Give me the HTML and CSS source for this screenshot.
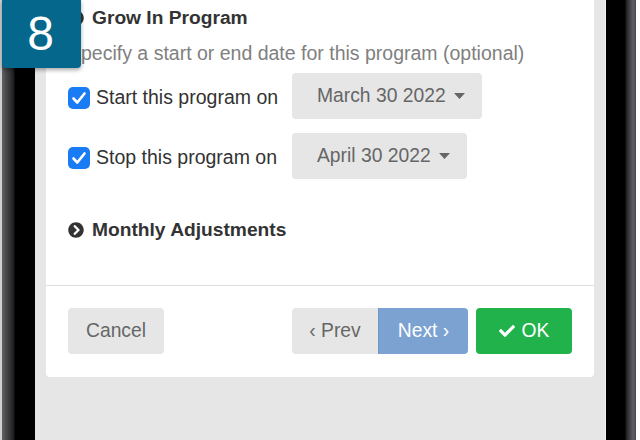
FILE: index.html
```html
<!DOCTYPE html>
<html>
<head>
<meta charset="utf-8">
<link rel="stylesheet" href="styles.css">
</head>
<body>
<div class="device">
  <div class="frame frame-left"></div>
  <div class="screen">
    <div class="panel">
      <div class="panel-body">
        <h3 class="section-title">
          <svg class="circle-icon" viewBox="0 0 512 512"><path d="M504 256c0 137-111 248-248 248S8 393 8 256 119 8 256 8s248 111 248 248zM273 369.9l135.5-135.5c9.4-9.4 9.4-24.6 0-33.9l-17-17c-9.4-9.4-24.6-9.4-33.9 0L256 285.1 154.4 183.5c-9.4-9.4-24.6-9.4-33.9 0l-17 17c-9.4 9.4-9.4 24.6 0 33.9L239 369.9c9.4 9.4 24.6 9.4 34 0z"/></svg>
          Grow In Program
        </h3>
        <p class="hint">Specify a start or end date for this program (optional)</p>
        <div class="date-rows">
          <label class="check-label">
            <span class="checkbox"><svg viewBox="0 0 22 22"><path d="M5.5 11.5l3.8 4 7.2-9"/></svg></span>
            Start this program on
          </label>
          <div><button class="date-btn">March 30 2022 <svg class="caret" viewBox="0 0 11 6"><polygon points="0,0 11,0 5.5,6"/></svg></button></div>
          <label class="check-label">
            <span class="checkbox"><svg viewBox="0 0 22 22"><path d="M5.5 11.5l3.8 4 7.2-9"/></svg></span>
            Stop this program on
          </label>
          <div><button class="date-btn">April 30 2022 <svg class="caret" viewBox="0 0 11 6"><polygon points="0,0 11,0 5.5,6"/></svg></button></div>
        </div>
        <h3 class="section-title monthly">
          <svg class="circle-icon" viewBox="0 0 512 512"><path d="M256 8c137 0 248 111 248 248S393 504 256 504 8 393 8 256 119 8 256 8zm113.9 231L234.4 103.5c-9.4-9.4-24.6-9.4-33.9 0l-17 17c-9.4 9.4-9.4 24.6 0 33.9L285.1 256 183.5 357.6c-9.4 9.4-9.4 24.6 0 33.9l17 17c9.4 9.4 24.6 9.4 33.9 0L369.9 273c9.4-9.4 9.4-24.6 0-34z"/></svg>
          Monthly Adjustments
        </h3>
      </div>
      <div class="panel-footer">
        <button class="btn btn-default">Cancel</button>
        <div class="footer-right">
          <div class="btn-group">
            <button class="btn btn-default btn-prev">‹ Prev</button>
            <button class="btn btn-next">Next ›</button>
          </div>
          <button class="btn btn-ok"><svg class="ok-icon" viewBox="0 0 512 512"><path d="M173.898 439.404l-166.4-166.4c-9.997-9.997-9.997-26.206 0-36.204l36.203-36.204c9.997-9.998 26.207-9.998 36.204 0L192 312.69 432.095 72.596c9.997-9.997 26.207-9.997 36.204 0l36.203 36.204c9.997 9.997 9.997 26.206 0 36.204l-294.4 294.401c-9.998 9.997-26.207 9.997-36.204-.001z"/></svg>OK</button>
        </div>
      </div>
    </div>
  </div>
  <div class="frame frame-right"></div>
  <div class="step-badge">8</div>
</div>
</body>
</html>
```
FILE: styles.css
```css
* { box-sizing: border-box; }
html, body { margin: 0; padding: 0; }
body {
  width: 640px;
  height: 440px;
  overflow: hidden;
  background: #fff;
  font-family: "Liberation Sans", Arial, Helvetica, sans-serif;
}
.device {
  position: relative;
  display: flex;
  width: 640px;
  height: 440px;
}
.frame { height: 100%; flex: none; }
.frame-left {
  width: 35px;
  background: linear-gradient(to right, #cfcfcf 0, #cfcfcf 2px, #626267 2px, #48484c 6px, #2e2e31 11px, #1a1a1c 14px, #000 15px, #000 35px);
}
.frame-right {
  width: 35px;
  background: linear-gradient(to right, #f4f4f4 0, #f4f4f4 1px, #000 1px, #000 20px, #1c1c1e 21px, #3b3b3e 24px, #606065 28px, #4a4a4e 31px, #fff 31px, #fff 35px);
}
.screen {
  flex: none;
  width: 570px;
  height: 100%;
  background: #e6e6e6;
  padding: 0 11px;
}
.panel {
  background: #fff;
  border-radius: 0 0 4px 4px;
}
.panel-body {
  padding: 6px 22px 43px 22px;
}
.section-title {
  margin: 0;
  display: flex;
  align-items: center;
  gap: 8px;
  font-size: 19.2px;
  line-height: 24px;
  font-weight: bold;
  color: #333;
}
.circle-icon {
  width: 16px;
  height: 16px;
  fill: #333;
  flex: none;
}
.hint {
  margin: 11px 0 0 0;
  font-size: 19.5px;
  line-height: 24px;
  color: #808080;
}
.date-rows {
  margin-top: 8px;
  display: grid;
  grid-template-columns: 224px auto;
  row-gap: 14px;
  align-items: center;
}
.check-label {
  display: flex;
  align-items: center;
  gap: 6px;
  font-size: 19.5px;
  color: #333;
  padding-top: 3px;
}
.checkbox {
  width: 22px;
  height: 22px;
  border-radius: 5px;
  background: #1a7cf4;
  display: inline-flex;
  flex: none;
}
.checkbox svg {
  width: 22px;
  height: 22px;
  fill: none;
  stroke: #fff;
  stroke-width: 2.6;
  stroke-linecap: round;
  stroke-linejoin: round;
}
.date-btn {
  height: 46px;
  border: none;
  border-radius: 4px;
  background: #e6e6e6;
  color: #666;
  font-family: inherit;
  font-size: 19.3px;
  padding: 0 17px 0 25px;
  display: inline-flex;
  align-items: center;
  gap: 8px;
}
.caret {
  width: 11px;
  height: 6px;
  fill: #666;
}
.monthly {
  margin-top: 39px;
}
.panel-footer {
  border-top: 1px solid #dedede;
  padding: 22px 22px 23px 22px;
  display: flex;
  justify-content: space-between;
  align-items: center;
}
.footer-right {
  display: flex;
  gap: 8px;
}
.btn-group { display: flex; }
.btn {
  height: 46px;
  border: none;
  border-radius: 4px;
  font-family: inherit;
  font-size: 19.3px;
  display: inline-flex;
  align-items: center;
  justify-content: center;
}
.btn-default {
  background: #e6e6e6;
  color: #666;
  width: 96px;
}
.btn-prev {
  width: 86px;
  border-radius: 4px 0 0 4px;
}
.btn-next {
  width: 90px;
  background: #7ba2d0;
  color: #fff;
  border-radius: 0 4px 4px 0;
  border-left: 1px solid #6f97c8;
}
.btn-ok {
  width: 96px;
  background: #22b24c;
  color: #fff;
  gap: 7px;
}
.ok-icon {
  width: 16px;
  height: 16px;
  fill: #fff;
}
.step-badge {
  position: absolute;
  left: 2px;
  top: 0;
  width: 79px;
  height: 68px;
  background: #04678b;
  border-radius: 0 0 4px 4px;
  box-shadow: 0 2px 4px rgba(0,0,0,0.35);
  color: #fff;
  font-size: 48px;
  line-height: 68px;
  text-align: center;
  padding-right: 2px;
}
```
